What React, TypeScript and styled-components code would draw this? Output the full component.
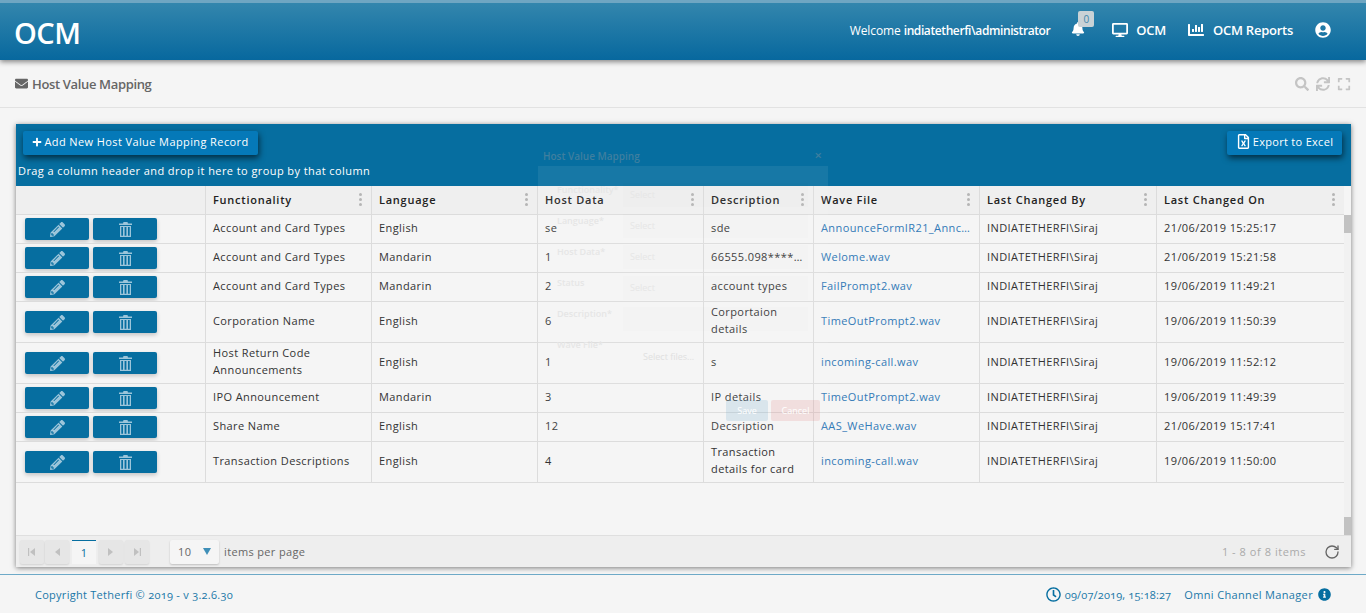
import styled, { createGlobalStyle } from "styled-components"
import {
    FaBell,
    FaChartBar,
    FaDesktop,
    FaEnvelope,
    FaExpand,
    FaInfoCircle,
    FaPencilAlt,
    FaPlus,
    FaRegClock,
    FaRegFileExcel,
    FaSearch,
    FaSync,
    FaUserCircle,
} from "react-icons/fa"
import { RotateCw } from "lucide-react"

const GlobalStyle = createGlobalStyle`
    html, body {
        margin: 0;
        padding: 0;
        height: 100%;
        overflow: hidden;
        background: #f5f5f5;
    }
    * {
        box-sizing: border-box;
    }
`

const Page = styled.div`
    display: flex;
    flex-direction: column;
    height: 613px;
    font-family: "Open Sans", "Liberation Sans", sans-serif;
    color: #333;
`

const TopBar = styled.header`
    display: flex;
    align-items: center;
    justify-content: space-between;
    height: 60px;
    padding: 3px 35px 0 14px;
    border-top: 3px solid #6fa6c2;
    background: linear-gradient(to bottom, #3386ad, #07689e);
    box-shadow: 0 2px 5px rgba(0, 0, 0, 0.45);
    color: #fff;
    position: relative;
    z-index: 2;
`

const Logo = styled.div`
    font-size: 29px;
    font-weight: 600;
    letter-spacing: -0.5px;
    margin-top: -2px;
`

const TopNav = styled.nav`
    display: flex;
    align-items: center;
    font-size: 13px;
    font-weight: 600;
    margin-top: -6px;
`

const Welcome = styled.span`
    font-size: 12px;
    font-weight: 400;
    margin-right: 21px;
    letter-spacing: -0.1px;

    b {
        font-weight: 600;
        letter-spacing: -0.4px;
    }
`

const BellWrap = styled.span`
    position: relative;
    display: flex;
    width: 14px;
    height: 16px;
    margin-right: 27px;
    font-size: 14px;
`

const BellBadge = styled.span`
    position: absolute;
    left: 7px;
    top: -11px;
    width: 16px;
    height: 16px;
    border-radius: 2px;
    background: #c9d2d6;
    color: #3f87ab;
    font-size: 10px;
    font-weight: 400;
    text-align: center;
    line-height: 16px;
`

const NavItem = styled.span<{ $gap: number; $after: number }>`
    display: flex;
    align-items: center;
    gap: ${(props) => props.$gap}px;
    margin-right: ${(props) => props.$after}px;
    letter-spacing: -0.25px;

    svg {
        font-size: 16px;
    }
`

const TitleRow = styled.div`
    display: flex;
    align-items: center;
    justify-content: space-between;
    height: 48px;
    padding: 0 15px;
    border-bottom: 1px solid #e2e2e2;
`

const PageTitle = styled.h1`
    display: flex;
    align-items: center;
    gap: 4px;
    margin: 0;
    color: #666;
    font-size: 13px;
    font-weight: 600;
    letter-spacing: -0.35px;
`

const TitleTools = styled.div`
    display: flex;
    align-items: center;
    gap: 7px;
    color: #c4c4c4;
    font-size: 14px;
`

const Grid = styled.section`
    position: relative;
    display: flex;
    flex-direction: column;
    height: 443px;
    margin: 16px 15px 7px 16px;
    box-shadow: 0 1px 5px rgba(0, 0, 0, 0.5);
    background: #f5f5f5;
    overflow: hidden;
`

const GridToolbar = styled.div`
    height: 62px;
    flex-shrink: 0;
    padding: 7px 9px 0 7px;
    background: #066ea0;
    color: #fff;
`

const ToolbarButtons = styled.div`
    display: flex;
    justify-content: space-between;
`

const ToolButton = styled.button<{ $width: number; $spacing: number }>`
    display: flex;
    align-items: center;
    justify-content: center;
    gap: 2px;
    width: ${(props) => props.$width}px;
    height: 24px;
    padding: 0 0 3px;
    border: 0;
    border-radius: 2px;
    background: #0579b8;
    color: #fff;
    font-family: "Open Sans", "Liberation Sans", sans-serif;
    font-size: 11px;
    font-weight: 500;
    letter-spacing: ${(props) => props.$spacing}px;
    box-shadow: 1px 3px 6px rgba(0, 0, 0, 0.6);

    svg {
        flex-shrink: 0;
    }
`

const GroupHint = styled.div`
    margin: 7px 0 0 -5px;
    font-size: 11px;
    font-weight: 500;
    letter-spacing: 0.42px;
    line-height: 17px;
`

const TableArea = styled.div`
    display: flex;
    flex: 1;
    min-height: 0;
`

const TableWrap = styled.div`
    width: 1328px;
    flex-shrink: 0;
`

const Table = styled.table`
    width: 1328px;
    table-layout: fixed;
    border-collapse: separate;
    border-spacing: 0;
    font-size: 11px;
    letter-spacing: 0.4px;
`

const HeadCell = styled.th`
    position: relative;
    height: 29px;
    padding: 0 7px 2px;
    border-right: 1px solid #dcdcdc;
    border-bottom: 1px solid #dcdcdc;
    background: #efefef;
    color: #222;
    font-weight: 600;
    letter-spacing: 0.75px;
    text-align: left;
    white-space: nowrap;

    &:last-child {
        border-right: 0;
    }
`

const ColumnDots = styled.span`
    position: absolute;
    right: 9px;
    top: 7px;
    display: flex;
    flex-direction: column;
    gap: 2px;

    i {
        display: block;
        width: 3px;
        height: 3px;
        border-radius: 50%;
        background: #b5b5b5;
    }
`

const Cell = styled.td`
    height: 29px;
    padding: 1px 7px 5px;
    border-right: 1px solid #dcdcdc;
    border-bottom: 1px solid #dcdcdc;
    color: #333;
    line-height: 17px;
    overflow: hidden;

    &:last-child {
        border-right: 0;
    }
`

const FileLink = styled.span`
    color: #337ab7;
    white-space: nowrap;
`

const ActionCell = styled(Cell)`
    padding: 0 0 0 9px;
`

const ActionRow = styled.div`
    display: flex;
    gap: 4px;
`

const RowButton = styled.button`
    display: flex;
    align-items: center;
    justify-content: center;
    width: 64px;
    height: 22px;
    padding: 0;
    border: 0;
    border-radius: 2px;
    background: #066ea0;
    color: #9cc5da;
    font-size: 15px;
    box-shadow: 0 2px 4px rgba(0, 0, 0, 0.2);
`

const ScrollBar = styled.div`
    display: flex;
    flex-direction: column;
    justify-content: space-between;
    width: 7px;
    margin-top: 29px;
    background: #f1f1f1;
`

const ScrollThumb = styled.div`
    height: 18px;
    background: #c2c2c2;
`

const Pager = styled.div`
    display: flex;
    align-items: center;
    flex-shrink: 0;
    height: 32px;
    padding: 0 11px 0 4px;
    border-top: 1px solid #dfdfdf;
    background: #eeeeee;
    font-size: 11px;
    letter-spacing: 0.35px;
    color: #666;
`

const PageButton = styled.span<{ $after: number }>`
    display: flex;
    align-items: center;
    justify-content: center;
    width: 24px;
    height: 24px;
    margin-right: ${(props) => props.$after}px;
    border-radius: 2px;
    background: #e6e6e6;
    box-shadow: 0 1px 2px rgba(0, 0, 0, 0.12);
    color: #c0c0c0;
`

const CurrentPage = styled.span`
    width: 24px;
    height: 24px;
    margin: 0 3px 0 2px;
    border-top: 1px solid #066ea0;
    background: #f5f5f5;
    color: #066ea0;
    text-align: center;
    line-height: 23px;
`

const PageSize = styled.span`
    display: flex;
    align-items: center;
    justify-content: space-between;
    width: 49px;
    height: 24px;
    margin: 0 5px 0 21px;
    padding: 0 7px 0 8px;
    border-radius: 2px;
    background: #f5f5f5;
    box-shadow: 0 1px 2px rgba(0, 0, 0, 0.2);
`

const PageInfo = styled.span`
    margin-left: auto;
    margin-right: 18px;
    color: #aaa;
    letter-spacing: 0.55px;
`

const Footer = styled.footer`
    display: flex;
    align-items: center;
    justify-content: space-between;
    flex: 1;
    padding: 0 35px 0 35px;
    border-top: 1px solid #6eaac8;
    color: #1a78a8;
    font-size: 11px;
    letter-spacing: 0.27px;
    font-feature-settings: "onum";
`

const FooterRight = styled.div`
    display: flex;
    align-items: center;
    letter-spacing: 0.35px;
`

const FooterClock = styled.span`
    display: flex;
    align-items: center;
    gap: 4px;
    margin-right: 13px;
    letter-spacing: 0.15px;

    svg {
        font-size: 15px;
        color: #066ea0;
    }
`

const FooterInfo = styled.span`
    display: flex;
    margin-left: 5px;
    color: #066ea0;
    font-size: 13px;
`

// the dialog that is fading out over the grid
const GhostDialog = styled.div`
    position: absolute;
    left: 522px;
    top: 21px;
    width: 290px;
    height: 290px;
    font-size: 9px;
    pointer-events: none;
`

const GhostTitle = styled.div`
    display: flex;
    justify-content: space-between;
    height: 21px;
    padding: 4px 6px 0 5px;
    color: #3f7f9f;
    font-size: 10px;
    font-weight: 600;

    span {
        font-size: 13px;
        line-height: 13px;
    }
`

const GhostBody = styled.div`
    height: 269px;
    background: rgba(255, 255, 255, 0.07);
    padding-top: 17px;
`

const GhostRow = styled.div<{ $height?: number }>`
    display: flex;
    height: ${(props) => props.$height ?? 31}px;
    padding-left: 19px;
    font-weight: 600;
    color: #e6e6e6;
`

const GhostLabel = styled.span`
    width: 66px;
`

const GhostField = styled.span`
    width: 185px;
    height: 24px;
    padding: 5px 7px;
    background: rgba(0, 0, 0, 0.006);
    color: #e6e6e6;
    font-weight: 400;
`

const GhostFiles = styled.span`
    display: block;
    width: 185px;
    height: 44px;
    padding: 12px 20px;
    color: #e0e0e0;
    font-weight: 400;
`

const GhostActions = styled.div`
    display: flex;
    gap: 3px;
    margin: 0 0 0 188px;
`

const GhostButton = styled.span<{ $tone: string; $width: number }>`
    width: ${(props) => props.$width}px;
    height: 21px;
    border-radius: 2px;
    background: ${(props) => props.$tone};
    color: #fff;
    text-align: center;
    line-height: 21px;
    font-size: 9px;
`

const columns = [
    { title: "", width: 190 },
    { title: "Functionality", width: 166 },
    { title: "Language", width: 166 },
    { title: "Host Data", width: 166 },
    { title: "Description", width: 110 },
    { title: "Wave File", width: 166 },
    { title: "Last Changed By", width: 177 },
    { title: "Last Changed On", width: 187 },
]

const records = [
    ["Account and Card Types", "English", "se", "sde", "AnnounceFormIR21_Annc…", "21/06/2019 15:25:17"],
    ["Account and Card Types", "Mandarin", "1", "66555.098****…", "Welome.wav", "21/06/2019 15:21:58"],
    ["Account and Card Types", "Mandarin", "2", "account types", "FailPrompt2.wav", "19/06/2019 11:49:21"],
    ["Corporation Name", "English", "6", "Corportaion details", "TimeOutPrompt2.wav", "19/06/2019 11:50:39"],
    ["Host Return Code Announcements", "English", "1", "s", "incoming-call.wav", "19/06/2019 11:52:12"],
    ["IPO Announcement", "Mandarin", "3", "IP details", "TimeOutPrompt2.wav", "19/06/2019 11:49:39"],
    ["Share Name", "English", "12", "Decsription", "AAS_WeHave.wav", "21/06/2019 15:17:41"],
    ["Transaction Descriptions", "English", "4", "Transaction details for card", "incoming-call.wav", "19/06/2019 11:50:00"],
]

const ghostFields = [
    ["Functionality*", "Select"],
    ["Language*", "Select"],
    ["Host Data*", "Select"],
    ["Status", "Select"],
    ["Description*", ""],
]

function PagerArrow({ dir, bar }: { dir: "left" | "right"; bar?: boolean }) {
    const tri = dir === "left" ? "M8 1v8L3 5z" : "M2 1v8l5-4z"
    const edge = dir === "left" ? "M1 1h1.2v8H1z" : "M7.8 1H9v8H7.8z"
    return (
        <svg width="10" height="10" viewBox="0 0 10 10" fill="currentColor">
            <path d={tri} />
            {bar && <path d={edge} />}
        </svg>
    )
}

function TrashIcon() {
    return (
        <svg width="13" height="15" viewBox="0 0 13 15" fill="currentColor" fillRule="evenodd">
            <path d="M4.5 0h4l.5 1.5h4V3H0V1.500h4zM1 4h11v11H1zM2.300 5v8.800h1.700V5zM5.600 5v8.800h1.800V5zM9 5v8.800h1.700V5z" />
        </svg>
    )
}

function App() {
    return (
        <Page>
            <GlobalStyle />
            <TopBar>
                <Logo>OCM</Logo>
                <TopNav>
                    <Welcome>
                        Welcome <b>indiatetherfi\administrator</b>
                    </Welcome>
                    <BellWrap>
                        <FaBell />
                        <BellBadge>0</BellBadge>
                    </BellWrap>
                    <NavItem $gap={8} $after={22}>
                        <FaDesktop />
                        OCM
                    </NavItem>
                    <NavItem $gap={9} $after={22}>
                        <FaChartBar />
                        OCM Reports
                    </NavItem>
                    <NavItem $gap={0} $after={0}>
                        <FaUserCircle />
                    </NavItem>
                </TopNav>
            </TopBar>
            <TitleRow>
                <PageTitle>
                    <FaEnvelope />
                    Host Value Mapping
                </PageTitle>
                <TitleTools>
                    <FaSearch />
                    <FaSync />
                    <FaExpand />
                </TitleTools>
            </TitleRow>
            <Grid>
                <GridToolbar>
                    <ToolbarButtons>
                        <ToolButton $width={235} $spacing={0.4}>
                            <FaPlus size={10} />
                            Add New Host Value Mapping Record
                        </ToolButton>
                        <ToolButton $width={115} $spacing={0.3}>
                            <FaRegFileExcel size={15} />
                            Export to Excel
                        </ToolButton>
                    </ToolbarButtons>
                    <GroupHint>Drag a column header and drop it here to group by that column</GroupHint>
                </GridToolbar>
                <TableArea>
                    <TableWrap>
                        <Table>
                            <colgroup>
                                {columns.map((column) => (
                                    <col key={column.title} width={column.width} />
                                ))}
                            </colgroup>
                            <thead>
                                <tr>
                                    {columns.map((column) => (
                                        <HeadCell key={column.title}>
                                            {column.title}
                                            {column.title && (
                                                <ColumnDots>
                                                    <i />
                                                    <i />
                                                    <i />
                                                </ColumnDots>
                                            )}
                                        </HeadCell>
                                    ))}
                                </tr>
                            </thead>
                            <tbody>
                                {records.map((row, index) => (
                                    <tr key={index}>
                                        <ActionCell>
                                            <ActionRow>
                                                <RowButton>
                                                    <FaPencilAlt />
                                                </RowButton>
                                                <RowButton>
                                                    <TrashIcon />
                                                </RowButton>
                                            </ActionRow>
                                        </ActionCell>
                                        <Cell>{row[0]}</Cell>
                                        <Cell>{row[1]}</Cell>
                                        <Cell>{row[2]}</Cell>
                                        <Cell>{row[3]}</Cell>
                                        <Cell>
                                            <FileLink>{row[4]}</FileLink>
                                        </Cell>
                                        <Cell>INDIATETHERFI\Siraj</Cell>
                                        <Cell>{row[5]}</Cell>
                                    </tr>
                                ))}
                            </tbody>
                        </Table>
                    </TableWrap>
                    <ScrollBar>
                        <ScrollThumb />
                        <ScrollThumb />
                    </ScrollBar>
                </TableArea>
                <Pager>
                    <PageButton $after={1}>
                        <PagerArrow dir="left" bar />
                    </PageButton>
                    <PageButton $after={1}>
                        <PagerArrow dir="left" />
                    </PageButton>
                    <CurrentPage>1</CurrentPage>
                    <PageButton $after={2}>
                        <PagerArrow dir="right" />
                    </PageButton>
                    <PageButton $after={0}>
                        <PagerArrow dir="right" bar />
                    </PageButton>
                    <PageSize>
                        10
                        <svg width="10" height="7" viewBox="0 0 10 7" fill="#3f8fb8">
                            <path d="M1 0h8L5 7z" />
                        </svg>
                    </PageSize>
                    items per page
                    <PageInfo>1 - 8 of 8 items</PageInfo>
                    <RotateCw size={16} color="#666" />
                </Pager>
                <GhostDialog>
                    <GhostTitle>
                        Host Value Mapping
                        <span>×</span>
                    </GhostTitle>
                    <GhostBody>
                        {ghostFields.map(([label, value]) => (
                            <GhostRow key={label}>
                                <GhostLabel>{label}</GhostLabel>
                                <GhostField>{value}</GhostField>
                            </GhostRow>
                        ))}
                        <GhostRow $height={62}>
                            <GhostLabel>Wave File*</GhostLabel>
                            <GhostFiles>Select files...</GhostFiles>
                        </GhostRow>
                        <GhostActions>
                            <GhostButton $tone="rgba(60, 140, 190, 0.15)" $width={42}>
                                Save
                            </GhostButton>
                            <GhostButton $tone="rgba(220, 70, 70, 0.13)" $width={49}>
                                Cancel
                            </GhostButton>
                        </GhostActions>
                    </GhostBody>
                </GhostDialog>
            </Grid>
            <Footer>
                <span>Copyright Tetherfi © 2019 - v 3.2.6.30</span>
                <FooterRight>
                    <FooterClock>
                        <FaRegClock />
                        09/07/2019, 15:18:27
                    </FooterClock>
                    Omni Channel Manager
                    <FooterInfo>
                        <FaInfoCircle />
                    </FooterInfo>
                </FooterRight>
            </Footer>
        </Page>
    )
}

export default App
